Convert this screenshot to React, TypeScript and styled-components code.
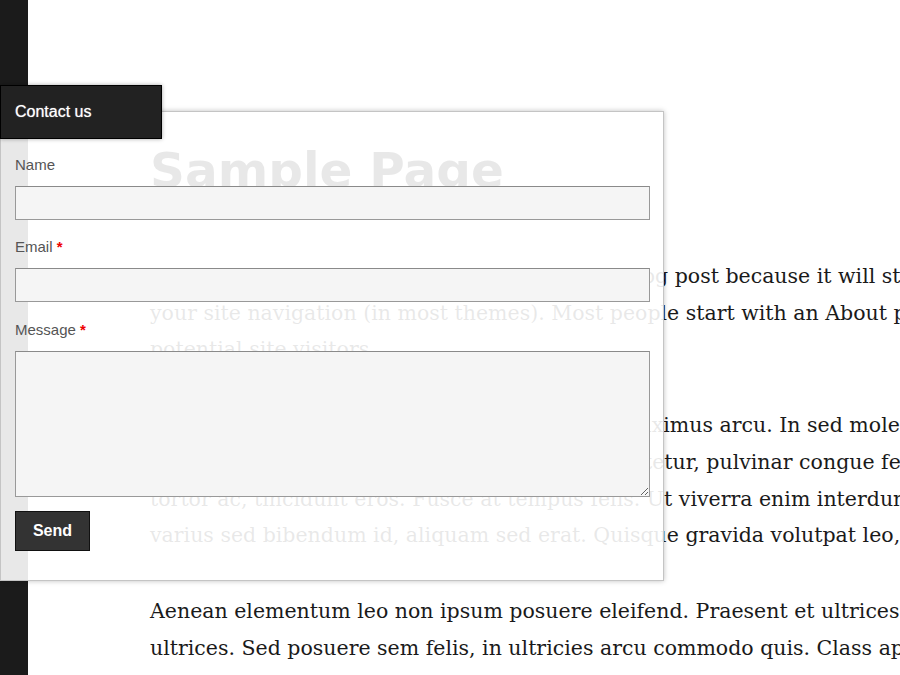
import React from "react";
import styled, { createGlobalStyle } from "styled-components";

const GlobalStyle = createGlobalStyle`
  html, body {
    margin: 0;
    padding: 0;
    background: #fff;
    overflow: hidden;
  }
  * {
    box-sizing: border-box;
  }
`;

const Page = styled.div`
  display: flex;
  width: 900px;
  height: 675px;
  overflow: hidden;
  position: relative;
`;

const Sidebar = styled.div`
  flex: 0 0 28px;
  height: 100%;
  background-color: #1b1b1b;
`;

const Content = styled.main`
  flex: 1;
  padding: 142px 0 0 122px;
  color: #1a1a1a;
  overflow: hidden;
`;

const Title = styled.h1`
  margin: 0 0 60px;
  font-family: "DejaVu Sans", sans-serif;
  font-weight: 700;
  font-size: 48.5px;
  line-height: 56px;
  color: #1a1a1a;
  white-space: nowrap;
`;

const Paragraph = styled.p`
  margin: 0 0 39px;
  font-family: "DejaVu Serif", serif;
  font-size: 20.5px;
  line-height: 36.7px;
`;

const Line = styled.span`
  display: block;
  white-space: nowrap;
`;

const Panel = styled.div`
  position: absolute;
  left: 0;
  top: 111px;
  width: 664px;
  padding: 44px 14px 29px 14px;
  background: rgba(255, 255, 255, 0.9);
  border: 1px solid #c4c4c4;
  box-shadow: 0 0 5px rgba(0, 0, 0, 0.25);
  font-family: "Liberation Sans", Arial, sans-serif;
`;

const Tab = styled.div`
  position: absolute;
  left: -1px;
  top: -27px;
  width: 162px;
  height: 54px;
  display: flex;
  align-items: center;
  padding-left: 14px;
  background-color: #222;
  border: 1px solid #000;
  box-shadow: 0 0 4px rgba(0, 0, 0, 0.35);
  color: #fff;
  font-size: 16px;
  text-shadow: 0 0 1px rgba(255, 255, 255, 0.7);
`;

const Field = styled.div<{ $gap?: number }>`
  display: flex;
  flex-direction: column;
  margin-bottom: ${(p) => p.$gap ?? 18}px;
`;

const Label = styled.label`
  font-size: 15px;
  line-height: 18px;
  color: #555;
  margin-bottom: 12px;
`;

const Required = styled.span`
  color: #e00;
  font-weight: 700;
`;

const Input = styled.input`
  width: 635px;
  height: 34px;
  margin: 0;
  background: #f5f5f5;
  border: 1px solid #999;
  border-top-color: #8a8a8a;
  font-family: inherit;
  font-size: 15px;
  outline: none;
`;

const TextArea = styled.textarea`
  display: block;
  width: 635px;
  height: 146px;
  margin: 0;
  background: #f5f5f5;
  border: 1px solid #999;
  border-top-color: #8a8a8a;
  font-family: inherit;
  font-size: 15px;
  outline: none;
`;

const SendButton = styled.button`
  display: block;
  width: 75px;
  height: 40px;
  margin-top: -4px;
  background-color: #333;
  border: 1px solid #111;
  color: #fff;
  font-family: "Liberation Sans", Arial, sans-serif;
  font-weight: 700;
  font-size: 16px;
  cursor: pointer;
`;

const paragraphs: string[][] = [
  [
    "This is an example page. It's different from a blog post because it will stay in one place and will show up in",
    "your site navigation (in most themes). Most people start with an About page that introduces them to",
    "potential site visitors.",
  ],
  [
    "Lorem ipsum dolor sit amet, consectetur elit maximus arcu. In sed molestie nisl, vel",
    "Aliquam erat volutpat. Vivamus ut lacus consectetur, pulvinar congue felis sit amet, tincidunt",
    "tortor ac, tincidunt eros. Fusce at tempus felis. Ut viverra enim interdum ante efficitur, a",
    "varius sed bibendum id, aliquam sed erat. Quisque gravida volutpat leo, sit amet",
  ],
  [
    "Aenean elementum leo non ipsum posuere eleifend. Praesent et ultrices lorem, at mattis",
    "ultrices. Sed posuere sem felis, in ultricies arcu commodo quis. Class aptent taciti sociosqu",
  ],
];

function ContactForm() {
  return (
    <Panel>
      <Tab>Contact us</Tab>
      <Field>
        <Label>Name</Label>
        <Input type="text" />
      </Field>
      <Field $gap={19}>
        <Label>
          Email <Required>*</Required>
        </Label>
        <Input type="email" />
      </Field>
      <Field>
        <Label>
          Message <Required>*</Required>
        </Label>
        <TextArea />
      </Field>
      <SendButton type="button">Send</SendButton>
    </Panel>
  );
}

export default function App() {
  return (
    <Page>
      <GlobalStyle />
      <Sidebar />
      <Content>
        <Title>Sample Page</Title>
        {paragraphs.map((lines, i) => (
          <Paragraph key={i}>
            {lines.map((l, j) => (
              <Line key={j}>{l}</Line>
            ))}
          </Paragraph>
        ))}
      </Content>
      <ContactForm />
    </Page>
  );
}
